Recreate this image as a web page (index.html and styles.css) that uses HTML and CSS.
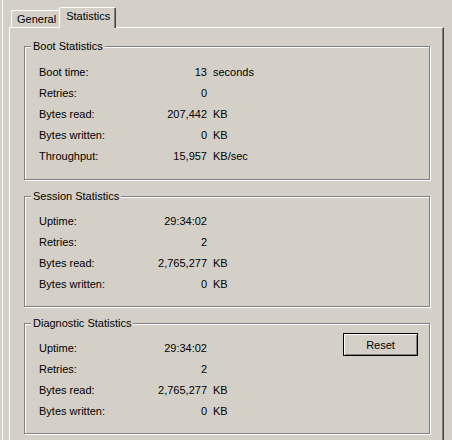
FILE: index.html
```html
<!DOCTYPE html>
<html lang="en">
<head>
<meta charset="utf-8">
<title>Statistics</title>
<link rel="stylesheet" href="styles.css">
</head>
<body>
<div class="window">
  <div class="tabs">
    <div class="tab">General</div>
    <div class="tab active">Statistics</div>
  </div>
  <div class="panel">
    <section class="group boot">
      <div class="group-title">Boot Statistics</div>
      <div class="group-body">
        <div class="stats">
          <span class="label">Boot time:</span><span class="value">13</span><span class="unit">seconds</span>
          <span class="label">Retries:</span><span class="value">0</span><span class="unit"></span>
          <span class="label">Bytes read:</span><span class="value">207,442</span><span class="unit">KB</span>
          <span class="label">Bytes written:</span><span class="value">0</span><span class="unit">KB</span>
          <span class="label">Throughput:</span><span class="value">15,957</span><span class="unit">KB/sec</span>
        </div>
      </div>
    </section>
    <section class="group">
      <div class="group-title">Session Statistics</div>
      <div class="group-body">
        <div class="stats">
          <span class="label">Uptime:</span><span class="value">29:34:02</span><span class="unit"></span>
          <span class="label">Retries:</span><span class="value">2</span><span class="unit"></span>
          <span class="label">Bytes read:</span><span class="value">2,765,277</span><span class="unit">KB</span>
          <span class="label">Bytes written:</span><span class="value">0</span><span class="unit">KB</span>
        </div>
      </div>
    </section>
    <section class="group">
      <div class="group-title">Diagnostic Statistics</div>
      <div class="group-body">
        <div class="stats">
          <span class="label">Uptime:</span><span class="value">29:34:02</span><span class="unit"></span>
          <span class="label">Retries:</span><span class="value">2</span><span class="unit"></span>
          <span class="label">Bytes read:</span><span class="value">2,765,277</span><span class="unit">KB</span>
          <span class="label">Bytes written:</span><span class="value">0</span><span class="unit">KB</span>
        </div>
        <button class="btn" type="button">Reset</button>
      </div>
    </section>
  </div>
</div>
</body>
</html>
```
FILE: styles.css
```css
html, body {
  margin: 0;
  padding: 0;
  background: #d4d0c8;
  overflow: hidden;
}

body {
  font-family: "Liberation Sans", Arial, sans-serif;
  font-size: 11px;
  color: #000;
  width: 452px;
  height: 440px;
}

.window {
  margin-left: 2px;
  border-left: 1px solid #fff;
  padding-left: 6px;
  height: 440px;
  box-sizing: border-box;
}

.tabs {
  display: flex;
  align-items: flex-end;
  height: 20px;
  padding-top: 7px;
  padding-left: 2px;
}

.tab {
  box-sizing: border-box;
  height: 17px;
  padding: 2px 5px 0 5px;
  line-height: 13px;
  border-top: 1px solid #fff;
  border-left: 1px solid #fff;
  border-right: 1px solid #404040;
  border-top-left-radius: 2px;
  border-top-right-radius: 2px;
  white-space: nowrap;
}

.tab.active {
  position: relative;
  z-index: 1;
  width: 57px;
  height: 21px;
  margin-left: -3px;
  margin-bottom: -1px;
  padding: 2px 0 0 6px;
  background: #d4d0c8;
  box-shadow: inset -1px 0 0 #808080;
}

.panel {
  width: 435px;
  height: 420px;
  box-sizing: border-box;
  border-top: 1px solid #fff;
  border-left: 1px solid #fff;
  border-right: 1px solid #404040;
  box-shadow: inset -1px 0 0 #808080;
  padding: 18px 13px 0 14px;
  display: flex;
  flex-direction: column;
  gap: 16px;
}

.group {
  border: 1px solid #808080;
  box-shadow: 1px 1px 0 #fff, inset 1px 1px 0 #fff;
}

.group-title {
  width: fit-content;
  margin: -7px 0 0 6px;
  padding: 0 2px;
  line-height: 13px;
  background: #d4d0c8;
  white-space: nowrap;
}

.group-body {
  display: flex;
  align-items: flex-start;
  padding: 8px 0 11px 14px;
}

.boot .group-body {
  padding-top: 9px;
  padding-bottom: 12px;
}

.stats {
  flex: 1;
  display: grid;
  grid-template-columns: 113px 55px auto;
  line-height: 21px;
}

.value {
  text-align: right;
  white-space: nowrap;
}

.unit {
  padding-left: 6px;
  white-space: nowrap;
}

.btn {
  box-sizing: border-box;
  width: 75px;
  height: 23px;
  margin: -5px 11px 0 0;
  padding: 0;
  font: inherit;
  color: #000;
  background: #d4d0c8;
  border: 1px solid #000;
  border-radius: 0;
  box-shadow: inset 1px 1px 0 #fff, inset -1px -1px 0 #808080;
}
```
